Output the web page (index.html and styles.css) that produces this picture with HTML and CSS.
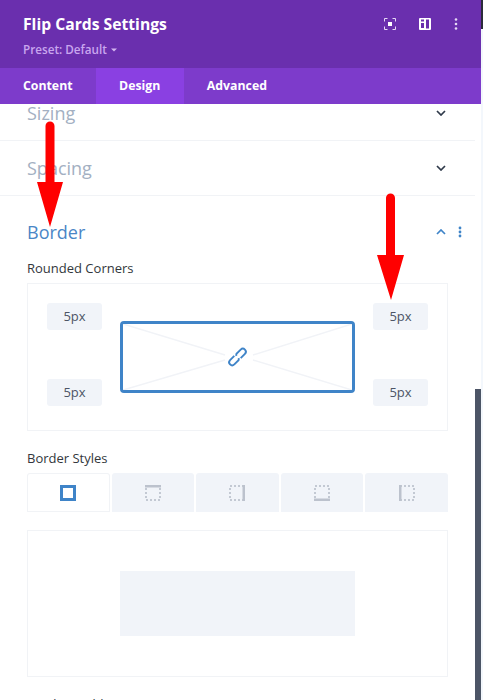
FILE: index.html
```html
<!DOCTYPE html>
<html lang="en">
<head>
<meta charset="utf-8">
<title>Flip Cards Settings</title>
<link rel="stylesheet" href="styles.css">
</head>
<body>
<div class="page">
  <div class="panel">
    <header class="head">
      <div class="head-text">
        <h1 class="title">Flip Cards Settings</h1>
        <div class="preset">Preset: Default <svg class="caret" width="6" height="4" viewBox="0 0 6 4"><path d="M0 .5h6L3 3.500z" fill="#d3b6f0"/></svg></div>
      </div>
      <div class="head-icons">
        <svg width="12" height="12" viewBox="0 0 12 12" fill="none" stroke="#e6d9f5" stroke-width="1"><path d="M3.500.5H.5v3M8.500.5h3v3M3.500 11.500H.5v-3M8.500 11.500h3v-3"/><rect x="4" y="4" width="4" height="4" fill="#fff" stroke="none"/></svg>
        <svg width="12" height="12" viewBox="0 0 12 12"><path fill="#fff" fill-rule="evenodd" d="M0 1a1 1 0 0 1 1-1h10a1 1 0 0 1 1 1v10a1 1 0 0 1-1 1H1a1 1 0 0 1-1-1zm2 .5v2h3v-2zm0 3.500v5h3V5zm5-3.500v9h3v-9z"/></svg>
        <svg width="4" height="12" viewBox="0 0 4 12" fill="#e6d9f5"><circle cx="2" cy="1.500" r="1.300"/><circle cx="2" cy="6" r="1.300"/><circle cx="2" cy="10.500" r="1.300"/></svg>
      </div>
    </header>
    <nav class="tabs">
      <a class="tab">Content</a>
      <a class="tab tab-on">Design</a>
      <a class="tab">Advanced</a>
    </nav>
    <main class="body">
      <section class="group group-sizing">
        <h2 class="group-title">Sizing</h2>
        <svg class="chev" width="10" height="6" viewBox="0 0 10 6" fill="none" stroke="#2f3a4a" stroke-width="1.700"><path d="M1 1l4 4 4-4"/></svg>
      </section>
      <section class="group group-spacing">
        <h2 class="group-title">Spacing</h2>
        <svg class="chev" width="10" height="6" viewBox="0 0 10 6" fill="none" stroke="#2f3a4a" stroke-width="1.700"><path d="M1 1l4 4 4-4"/></svg>
      </section>
      <section class="border-sec">
        <div class="border-head">
          <h2 class="group-title title-on">Border</h2>
          <div class="border-actions">
            <svg width="10" height="6" viewBox="0 0 10 6" fill="none" stroke="#3f84c8" stroke-width="1.700"><path d="M1 5l4-4 4 4"/></svg>
            <svg width="4" height="12" viewBox="0 0 4 12" fill="#3f84c8"><circle cx="2" cy="2" r="1.400"/><circle cx="2" cy="6" r="1.400"/><circle cx="2" cy="10" r="1.400"/></svg>
          </div>
        </div>
        <div class="label">Rounded Corners</div>
        <div class="corners">
          <div class="corner-col">
            <div class="val">5px</div>
            <div class="val">5px</div>
          </div>
          <div class="corner-box">
            <svg class="corner-art" width="229" height="66" viewBox="0 0 229 66" fill="none">
              <path d="M0 0L102 31M229 0L130 31M0 66L102 36M229 66L130 36" stroke="#f1f3f7" stroke-width="1.500"/>
              <g stroke="#3f84c8" stroke-width="1.900" transform="rotate(-45 114.500 33)">
                <path d="M113 30h-6a3 3 0 0 0 0 6h6a3 3 0 0 0 1.500-1.500"/>
                <path d="M116 36h6a3 3 0 0 0 0-6h-6a3 3 0 0 0-1.500 1.500"/>
              </g>
            </svg>
          </div>
          <div class="corner-col">
            <div class="val">5px</div>
            <div class="val">5px</div>
          </div>
        </div>
        <div class="label label-styles">Border Styles</div>
        <div class="styles">
          <div class="style style-on"><span class="sq"></span></div>
          <div class="style"><svg class="side" width="16" height="16" viewBox="0 0 16 16"><rect class="dots" x="1" y="1" width="14" height="14"/><path class="solid" d="M0 1h16"/></svg></div>
          <div class="style"><svg class="side" width="16" height="16" viewBox="0 0 16 16"><rect class="dots" x="1" y="1" width="14" height="14"/><path class="solid" d="M15 0v16"/></svg></div>
          <div class="style"><svg class="side" width="16" height="16" viewBox="0 0 16 16"><rect class="dots" x="1" y="1" width="14" height="14"/><path class="solid" d="M0 15h16"/></svg></div>
          <div class="style"><svg class="side" width="16" height="16" viewBox="0 0 16 16"><rect class="dots" x="1" y="1" width="14" height="14"/><path class="solid" d="M1 0v16"/></svg></div>
        </div>
        <div class="preview"><div class="preview-fill"></div></div>
        <div class="label label-width">Border Width</div>
      </section>
    </main>
    <div class="scrollbar"></div>
  </div>
  <div class="edge"><div class="edge-dark"></div></div>
</div>
<svg class="arrow arrow-left" width="26" height="106" viewBox="0 0 26 106"><path fill="#f00" d="M8.500 5a4.500 4.500 0 0 1 9 0v56H26L13 106 0 61h8.500z"/></svg>
<svg class="arrow arrow-right" width="27" height="107" viewBox="0 0 27 107"><path fill="#f00" d="M9 5a4.500 4.500 0 0 1 9 0v57h9L14 107 0 62h9z"/></svg>
</body>
</html>
```
FILE: styles.css
```css
html, body {
  margin: 0;
  height: 700px;
  overflow: hidden;
  background: #fff;
}
body {
  position: relative;
  font-family: "Open Sans", "Noto Sans", sans-serif;
}
.page {
  display: flex;
  height: 700px;
}
.panel {
  position: relative;
  width: 481px;
  height: 700px;
  overflow: hidden;
  display: flex;
  flex-direction: column;
}
.edge {
  width: 2px;
  background: #f3f7fc;
}
.edge-dark {
  height: 29px;
  background: #2b2b3b;
}
.head {
  height: 68px;
  flex: none;
  background: #6a2fae;
  display: flex;
  justify-content: space-between;
  padding: 0 23px;
  box-sizing: border-box;
}
.title {
  margin: 13px 0 0;
  font-size: 15.700px;
  line-height: 22px;
  font-weight: 700;
  color: #fff;
}
.preset {
  margin-top: 6px;
  font-size: 11.700px;
  line-height: 16px;
  font-weight: 600;
  color: #c9a6ee;
}
.caret {
  vertical-align: 2px;
  margin-left: 1px;
}
.head-icons {
  display: flex;
  align-items: center;
  height: 48px;
}
.head-icons svg:nth-child(1) { margin-right: 23px; }
.head-icons svg:nth-child(2) { margin-right: 23px; }
.tabs {
  height: 36px;
  flex: none;
  background: #7d3bcb;
  display: flex;
}
.tab {
  font-size: 12.300px;
  font-weight: 700;
  line-height: 36px;
  color: #fff;
  padding: 0 23px;
}
.tab-on {
  padding: 0 23.500px;
  background: #8a40e2;
}
.body {
  flex: 1;
  width: 475px;
  overflow: hidden;
}
.group {
  display: flex;
  justify-content: space-between;
  align-items: center;
  box-sizing: border-box;
  padding: 0 29px 0 27px;
  border-bottom: 1px solid #f1f3f6;
}
.group-sizing {
  height: 37px;
  padding-bottom: 18px;
}
.group-sizing .group-title {
  line-height: 18px;
}
.group-spacing {
  height: 55px;
}
.group-title {
  margin: 0;
  font-size: 18px;
  line-height: 24px;
  font-weight: 400;
  color: #a3b0c2;
}
.title-on {
  color: #4a86c6;
}
.border-sec {
  padding: 0 27px;
}
.border-head {
  display: flex;
  justify-content: space-between;
  align-items: center;
  height: 24px;
  margin-top: 24px;
}
.border-actions {
  display: flex;
  align-items: center;
  gap: 12px;
  margin-right: -14px;
}
.label {
  margin-top: 15px;
  font-size: 13px;
  line-height: 18px;
  font-weight: 500;
  color: #32373c;
}
.corners {
  box-sizing: border-box;
  height: 148px;
  margin-top: 6px;
  padding: 19px;
  border: 1px solid #f1f3f6;
  display: flex;
  justify-content: space-between;
}
.corner-col {
  width: 55px;
  display: flex;
  flex-direction: column;
  justify-content: space-between;
  height: 103px;
}
.val {
  height: 27px;
  border-radius: 3px;
  background: #f1f4f9;
  font-size: 13px;
  line-height: 27px;
  text-align: center;
  color: #4c5566;
}
.corner-box {
  box-sizing: border-box;
  width: 235px;
  height: 72px;
  margin-top: 18px;
  border: 3px solid #3f84c8;
  border-radius: 4px;
}
.corner-art {
  display: block;
}
.label-styles {
  margin-top: 18px;
}
.styles {
  display: flex;
  gap: 2px;
  margin-top: 6px;
  height: 39px;
}
.style {
  flex: 1;
  background: #f1f4f9;
  border-radius: 3px 3px 0 0;
  display: flex;
  align-items: center;
  justify-content: center;
}
.style-on {
  background: #fff;
  box-shadow: inset 0 0 0 1px #f1f3f6;
}
.sq {
  box-sizing: border-box;
  width: 16px;
  height: 16px;
  border: 3px solid #3f84c8;
}
.dots {
  fill: none;
  stroke: #c3c9d3;
  stroke-width: 2;
  stroke-dasharray: 2 2;
}
.solid {
  fill: none;
  stroke: #bcc2cd;
  stroke-width: 3;
}
.preview {
  box-sizing: border-box;
  height: 147px;
  margin-top: 18px;
  padding: 40px 92px;
  border: 1px solid #f1f3f6;
}
.preview-fill {
  height: 65px;
  background: #f1f4f9;
}
.label-width {
  margin-top: 18px;
}
.scrollbar {
  position: absolute;
  right: 0;
  top: 389px;
  bottom: 0;
  width: 6px;
  background: #4c5566;
}
.arrow {
  position: absolute;
}
.arrow-left {
  left: 37px;
  top: 121px;
}
.arrow-right {
  left: 377px;
  top: 193px;
}
```
